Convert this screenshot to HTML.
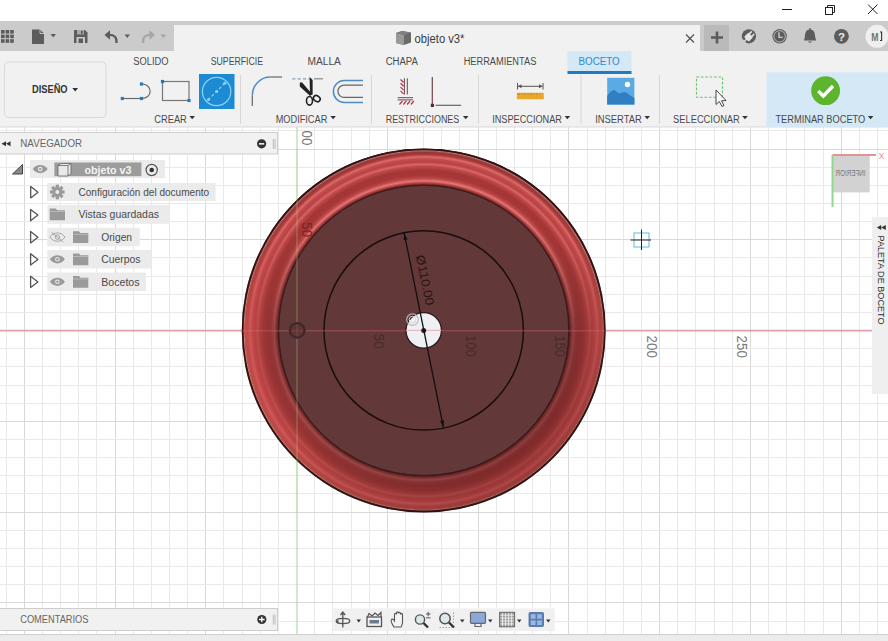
<!DOCTYPE html>
<html><head><meta charset="utf-8">
<style>
html,body{margin:0;padding:0;}
body{width:888px;height:641px;overflow:hidden;position:relative;background:#fff;font-family:"Liberation Sans",sans-serif;}
</style></head><body>
<svg width="888" height="641" viewBox="0 0 888 641" style="position:absolute;left:0;top:0" font-family="Liberation Sans, sans-serif">

<defs>
<radialGradient id="ring" gradientUnits="userSpaceOnUse" cx="423.7" cy="330.4" r="182.0">
<stop offset="0.0000" stop-color="#623839"/>
<stop offset="0.7929" stop-color="#623839"/>
<stop offset="0.7967" stop-color="#301616"/>
<stop offset="0.8011" stop-color="#4a2020"/>
<stop offset="0.8077" stop-color="#6a2828"/>
<stop offset="0.8407" stop-color="#7e2e2e"/>
<stop offset="0.8791" stop-color="#983636"/>
<stop offset="0.9121" stop-color="#ac3c3c"/>
<stop offset="0.9396" stop-color="#c04646"/>
<stop offset="0.9615" stop-color="#cc5050"/>
<stop offset="0.9780" stop-color="#d45a50"/>
<stop offset="0.9852" stop-color="#d06050"/>
<stop offset="0.9857" stop-color="#d89088"/>
<stop offset="0.9918" stop-color="#3a1414"/>
<stop offset="1.0000" stop-color="#2a1010"/>
</radialGradient>
<radialGradient id="band" gradientUnits="userSpaceOnUse" cx="423.7" cy="330.4" r="182.0">
<stop offset="0.0000" stop-color="#623839"/>
<stop offset="0.7929" stop-color="#623839"/>
<stop offset="0.7967" stop-color="#301616"/>
<stop offset="0.8022" stop-color="#7a2828"/>
<stop offset="0.8104" stop-color="#b84444"/>
<stop offset="0.8214" stop-color="#e87a7a"/>
<stop offset="0.8352" stop-color="#c04848"/>
<stop offset="0.8516" stop-color="#a83838"/>
<stop offset="0.8791" stop-color="#a43636"/>
<stop offset="0.9011" stop-color="#c04848"/>
<stop offset="0.9121" stop-color="#d86868"/>
<stop offset="0.9258" stop-color="#b84242"/>
<stop offset="0.9423" stop-color="#c44c4c"/>
<stop offset="0.9533" stop-color="#dc6c6c"/>
<stop offset="0.9670" stop-color="#a83a3a"/>
<stop offset="0.9780" stop-color="#983434"/>
<stop offset="0.9863" stop-color="#b06060"/>
<stop offset="0.9857" stop-color="#c08080"/>
<stop offset="0.9918" stop-color="#3a1414"/>
<stop offset="1.0000" stop-color="#2a1010"/>
</radialGradient>
<linearGradient id="mgrad" x1="0.5" y1="0" x2="0.5" y2="1">
<stop offset="0" stop-color="#fff"/>
<stop offset="0.2" stop-color="#fff" stop-opacity="0.95"/>
<stop offset="0.5" stop-color="#fff" stop-opacity="0.35"/>
<stop offset="1" stop-color="#fff" stop-opacity="0.45"/>
</linearGradient>
<linearGradient id="shade2" x1="0.25" y1="0.1" x2="0.8" y2="0.95">
<stop offset="0" stop-color="#000" stop-opacity="0"/>
<stop offset="0.5" stop-color="#000" stop-opacity="0"/>
<stop offset="1" stop-color="#200000" stop-opacity="0.22"/>
</linearGradient>
<mask id="tmask" maskUnits="userSpaceOnUse" x="0" y="0" width="888" height="641">
<rect x="241.7" y="148.39999999999998" width="364.0" height="364.0" fill="url(#mgrad)"/>
</mask>
<linearGradient id="shade" x1="0.2" y1="0" x2="0.8" y2="1">
<stop offset="0" stop-color="#ffffff" stop-opacity="0.16"/>
<stop offset="0.5" stop-color="#ffffff" stop-opacity="0"/>
<stop offset="1" stop-color="#000000" stop-opacity="0.16"/>
</linearGradient>
<linearGradient id="hlTop" x1="0" y1="0" x2="0" y2="1">
<stop offset="0" stop-color="#ff9c9c" stop-opacity="0.75"/>
<stop offset="0.25" stop-color="#ff9c9c" stop-opacity="0.2"/>
<stop offset="0.45" stop-color="#ff9c9c" stop-opacity="0"/>
</linearGradient>
<linearGradient id="hlTop2" x1="0" y1="0" x2="0.3" y2="1">
<stop offset="0" stop-color="#f09090" stop-opacity="0.45"/>
<stop offset="0.5" stop-color="#f09090" stop-opacity="0.1"/>
<stop offset="1" stop-color="#f09090" stop-opacity="0"/>
</linearGradient>
<linearGradient id="hlOut" x1="0" y1="0" x2="1" y2="1">
<stop offset="0" stop-color="#e87070" stop-opacity="0.35"/>
<stop offset="0.5" stop-color="#e06060" stop-opacity="0.15"/>
<stop offset="1" stop-color="#d85858" stop-opacity="0.3"/>
</linearGradient>
</defs>
<rect x="0" y="127" width="888" height="507" fill="#ffffff"/>
<line x1="6.5" y1="127" x2="6.5" y2="634" stroke="#e9e9e9"/>
<line x1="24.5" y1="127" x2="24.5" y2="634" stroke="#d9d9d9"/>
<line x1="42.5" y1="127" x2="42.5" y2="634" stroke="#e9e9e9"/>
<line x1="60.5" y1="127" x2="60.5" y2="634" stroke="#e9e9e9"/>
<line x1="78.5" y1="127" x2="78.5" y2="634" stroke="#e9e9e9"/>
<line x1="96.5" y1="127" x2="96.5" y2="634" stroke="#e9e9e9"/>
<line x1="115.5" y1="127" x2="115.5" y2="634" stroke="#d9d9d9"/>
<line x1="133.5" y1="127" x2="133.5" y2="634" stroke="#e9e9e9"/>
<line x1="151.5" y1="127" x2="151.5" y2="634" stroke="#e9e9e9"/>
<line x1="169.5" y1="127" x2="169.5" y2="634" stroke="#e9e9e9"/>
<line x1="187.5" y1="127" x2="187.5" y2="634" stroke="#e9e9e9"/>
<line x1="205.5" y1="127" x2="205.5" y2="634" stroke="#d9d9d9"/>
<line x1="223.5" y1="127" x2="223.5" y2="634" stroke="#e9e9e9"/>
<line x1="242.5" y1="127" x2="242.5" y2="634" stroke="#e9e9e9"/>
<line x1="260.5" y1="127" x2="260.5" y2="634" stroke="#e9e9e9"/>
<line x1="278.5" y1="127" x2="278.5" y2="634" stroke="#e9e9e9"/>
<line x1="314.5" y1="127" x2="314.5" y2="634" stroke="#e9e9e9"/>
<line x1="332.5" y1="127" x2="332.5" y2="634" stroke="#e9e9e9"/>
<line x1="351.5" y1="127" x2="351.5" y2="634" stroke="#e9e9e9"/>
<line x1="369.5" y1="127" x2="369.5" y2="634" stroke="#e9e9e9"/>
<line x1="387.5" y1="127" x2="387.5" y2="634" stroke="#d9d9d9"/>
<line x1="405.5" y1="127" x2="405.5" y2="634" stroke="#e9e9e9"/>
<line x1="423.5" y1="127" x2="423.5" y2="634" stroke="#e9e9e9"/>
<line x1="441.5" y1="127" x2="441.5" y2="634" stroke="#e9e9e9"/>
<line x1="459.5" y1="127" x2="459.5" y2="634" stroke="#e9e9e9"/>
<line x1="478.5" y1="127" x2="478.5" y2="634" stroke="#d9d9d9"/>
<line x1="496.5" y1="127" x2="496.5" y2="634" stroke="#e9e9e9"/>
<line x1="514.5" y1="127" x2="514.5" y2="634" stroke="#e9e9e9"/>
<line x1="532.5" y1="127" x2="532.5" y2="634" stroke="#e9e9e9"/>
<line x1="550.5" y1="127" x2="550.5" y2="634" stroke="#e9e9e9"/>
<line x1="568.5" y1="127" x2="568.5" y2="634" stroke="#d9d9d9"/>
<line x1="587.5" y1="127" x2="587.5" y2="634" stroke="#e9e9e9"/>
<line x1="605.5" y1="127" x2="605.5" y2="634" stroke="#e9e9e9"/>
<line x1="623.5" y1="127" x2="623.5" y2="634" stroke="#e9e9e9"/>
<line x1="641.5" y1="127" x2="641.5" y2="634" stroke="#e9e9e9"/>
<line x1="659.5" y1="127" x2="659.5" y2="634" stroke="#d9d9d9"/>
<line x1="677.5" y1="127" x2="677.5" y2="634" stroke="#e9e9e9"/>
<line x1="695.5" y1="127" x2="695.5" y2="634" stroke="#e9e9e9"/>
<line x1="714.5" y1="127" x2="714.5" y2="634" stroke="#e9e9e9"/>
<line x1="732.5" y1="127" x2="732.5" y2="634" stroke="#e9e9e9"/>
<line x1="750.5" y1="127" x2="750.5" y2="634" stroke="#d9d9d9"/>
<line x1="768.5" y1="127" x2="768.5" y2="634" stroke="#e9e9e9"/>
<line x1="786.5" y1="127" x2="786.5" y2="634" stroke="#e9e9e9"/>
<line x1="804.5" y1="127" x2="804.5" y2="634" stroke="#e9e9e9"/>
<line x1="823.5" y1="127" x2="823.5" y2="634" stroke="#e9e9e9"/>
<line x1="841.5" y1="127" x2="841.5" y2="634" stroke="#d9d9d9"/>
<line x1="859.5" y1="127" x2="859.5" y2="634" stroke="#e9e9e9"/>
<line x1="877.5" y1="127" x2="877.5" y2="634" stroke="#e9e9e9"/>
<line x1="0" y1="130.5" x2="888" y2="130.5" stroke="#e9e9e9"/>
<line x1="0" y1="149.5" x2="888" y2="149.5" stroke="#d9d9d9"/>
<line x1="0" y1="167.5" x2="888" y2="167.5" stroke="#e9e9e9"/>
<line x1="0" y1="185.5" x2="888" y2="185.5" stroke="#e9e9e9"/>
<line x1="0" y1="203.5" x2="888" y2="203.5" stroke="#e9e9e9"/>
<line x1="0" y1="221.5" x2="888" y2="221.5" stroke="#e9e9e9"/>
<line x1="0" y1="239.5" x2="888" y2="239.5" stroke="#d9d9d9"/>
<line x1="0" y1="257.5" x2="888" y2="257.5" stroke="#e9e9e9"/>
<line x1="0" y1="276.5" x2="888" y2="276.5" stroke="#e9e9e9"/>
<line x1="0" y1="294.5" x2="888" y2="294.5" stroke="#e9e9e9"/>
<line x1="0" y1="312.5" x2="888" y2="312.5" stroke="#e9e9e9"/>
<line x1="0" y1="348.5" x2="888" y2="348.5" stroke="#e9e9e9"/>
<line x1="0" y1="366.5" x2="888" y2="366.5" stroke="#e9e9e9"/>
<line x1="0" y1="385.5" x2="888" y2="385.5" stroke="#e9e9e9"/>
<line x1="0" y1="403.5" x2="888" y2="403.5" stroke="#e9e9e9"/>
<line x1="0" y1="421.5" x2="888" y2="421.5" stroke="#d9d9d9"/>
<line x1="0" y1="439.5" x2="888" y2="439.5" stroke="#e9e9e9"/>
<line x1="0" y1="457.5" x2="888" y2="457.5" stroke="#e9e9e9"/>
<line x1="0" y1="475.5" x2="888" y2="475.5" stroke="#e9e9e9"/>
<line x1="0" y1="493.5" x2="888" y2="493.5" stroke="#e9e9e9"/>
<line x1="0" y1="512.5" x2="888" y2="512.5" stroke="#d9d9d9"/>
<line x1="0" y1="530.5" x2="888" y2="530.5" stroke="#e9e9e9"/>
<line x1="0" y1="548.5" x2="888" y2="548.5" stroke="#e9e9e9"/>
<line x1="0" y1="566.5" x2="888" y2="566.5" stroke="#e9e9e9"/>
<line x1="0" y1="584.5" x2="888" y2="584.5" stroke="#e9e9e9"/>
<line x1="0" y1="602.5" x2="888" y2="602.5" stroke="#d9d9d9"/>
<line x1="0" y1="621.5" x2="888" y2="621.5" stroke="#e9e9e9"/>
<line x1="0" y1="330.70000000000005" x2="888" y2="330.70000000000005" stroke="#dea2aa" stroke-width="1.7"/>
<line x1="297" y1="127" x2="297" y2="634" stroke="#a8daa8" stroke-width="1.1"/>
<circle cx="423.7" cy="330.4" r="182.0" fill="url(#ring)"/>
<circle cx="423.7" cy="330.4" r="182.0" fill="url(#band)" mask="url(#tmask)"/>
<circle cx="423.7" cy="330.4" r="180.4" fill="url(#shade2)"/>
<circle cx="423.7" cy="330.4" r="145.0" fill="#623839" stroke="#3a1c1c" stroke-width="1"/>
<circle cx="423.7" cy="330.4" r="99.7" fill="none" stroke="#1a0d0d" stroke-width="1.5"/>
<line x1="241.7" y1="330.70000000000005" x2="605.7" y2="330.70000000000005" stroke="#e07080" stroke-width="1.5" opacity="0.3"/>
<line x1="297" y1="148.39999999999998" x2="297" y2="512.4" stroke="#b0d880" stroke-width="1.2" opacity="0.35"/>
<circle cx="423.7" cy="330.4" r="17.7" fill="#eef0f4" stroke="#2a1a1a" stroke-width="1.3"/>
<line x1="406.0" y1="330.40000000000003" x2="441.4" y2="330.40000000000003" stroke="#e8b8c0" stroke-width="1.4"/>
<circle cx="423.7" cy="330.4" r="2.5" fill="#222"/>
<line x1="404.2" y1="233.0" x2="443.4" y2="427.4" stroke="#111" stroke-width="1.3"/>
<path d="M0,0 L7,-2 L7,2 Z" fill="#111" transform="translate(404.2,233.0) rotate(78.59940972266045)"/>
<path d="M0,0 L-7,-2 L-7,2 Z" fill="#111" transform="translate(443.4,427.4) rotate(78.59940972266045)"/>
<text transform="translate(415.8,255.8) rotate(78.59940972266045)" font-size="12.2" fill="#2a1414" textLength="51" lengthAdjust="spacingAndGlyphs">Ø110.00</text>
<circle cx="412.5" cy="319.6" r="5.8" fill="none" stroke="#b8b8b8" stroke-width="1.1"/>
<circle cx="412.5" cy="319.6" r="3.3" fill="none" stroke="#d8d8d8" stroke-width="1"/>
<circle cx="412.5" cy="319.6" r="1.2" fill="#eee"/>
<circle cx="297.2" cy="330.4" r="7.3" fill="#5e3234" fill-opacity="0.6" stroke="#44262a" stroke-width="2.2"/>
<text transform="translate(374.2,333.8) rotate(90)" font-size="14.3" fill="#4a2a2c" textLength="14.8" lengthAdjust="spacingAndGlyphs">50</text>
<text transform="translate(465.6,335) rotate(90)" font-size="14.3" fill="#4a2a2c" textLength="21.6" lengthAdjust="spacingAndGlyphs">100</text>
<text transform="translate(555.3,335.2) rotate(90)" font-size="14.3" fill="#4a2a2c" textLength="21.6" lengthAdjust="spacingAndGlyphs">150</text>
<text transform="translate(646.8,335.6) rotate(90)" font-size="14.3" fill="#7a7a7a" textLength="22.2" lengthAdjust="spacingAndGlyphs">200</text>
<text transform="translate(737.3,335.6) rotate(90)" font-size="14.3" fill="#7a7a7a" textLength="22.2" lengthAdjust="spacingAndGlyphs">250</text>
<text transform="translate(301.6,222.3) rotate(90)" font-size="14.3" fill="#7a2424" textLength="14.8" lengthAdjust="spacingAndGlyphs">50</text>
<text transform="translate(301.5,130.6) rotate(90)" font-size="14.3" fill="#777" textLength="14.8" lengthAdjust="spacingAndGlyphs">00</text>


<rect x="0" y="0" width="888" height="21" fill="#ffffff"/>
<rect x="0" y="21" width="888" height="30" fill="#cbcbcb"/>
<rect x="174" y="25" width="526" height="26" fill="#f1f1f1"/>
<rect x="704" y="25" width="25" height="26" fill="#bababa"/>
<rect x="0" y="51" width="888" height="76" fill="#f1f1f1"/>
<rect x="0" y="126.5" width="888" height="1" fill="#dadada"/>
<rect x="0" y="634" width="888" height="7" fill="#ececec"/>
<rect x="0" y="634" width="888" height="1" fill="#cfcfcf"/>

<g stroke="#222" stroke-width="1" fill="none">
<line x1="782" y1="9.5" x2="792" y2="9.5"/>
<path d="M827.5,7.5 V5.5 H834.5 V12.5 H832.5"/>
<rect x="825.5" y="7.5" width="7" height="7"/>
<path d="M868,4.5 L877.5,14 M877.5,4.5 L868,14"/>
</g>
<rect x="1.00" y="30.00" width="3.6" height="3.6" fill="#5c5c5c"/>
<rect x="1.00" y="34.60" width="3.6" height="3.6" fill="#5c5c5c"/>
<rect x="1.00" y="39.20" width="3.6" height="3.6" fill="#5c5c5c"/>
<rect x="5.60" y="30.00" width="3.6" height="3.6" fill="#5c5c5c"/>
<rect x="5.60" y="34.60" width="3.6" height="3.6" fill="#5c5c5c"/>
<rect x="5.60" y="39.20" width="3.6" height="3.6" fill="#5c5c5c"/>
<rect x="10.20" y="30.00" width="3.6" height="3.6" fill="#5c5c5c"/>
<rect x="10.20" y="34.60" width="3.6" height="3.6" fill="#5c5c5c"/>
<rect x="10.20" y="39.20" width="3.6" height="3.6" fill="#5c5c5c"/>
<path d="M32,29.5 H40 L44,33.5 V44 H32 Z" fill="#5c5c5c"/>
<path d="M40,29.5 V33.5 H44" fill="none" stroke="#cbcbcb" stroke-width="0.9"/>
<path d="M50.5,34 h5.5 l-2.75,3.5 z" fill="#5c5c5c"/>
<path d="M74,30 H85 L87.5,32.5 V43 H74 Z" fill="#5c5c5c"/>
<rect x="77" y="30" width="7" height="4.5" fill="#a8a8a8"/>
<rect x="81" y="30.8" width="1.8" height="3" fill="#5c5c5c"/>
<rect x="76.5" y="37" width="8.5" height="6" fill="#cbcbcb"/>
<rect x="78.5" y="38.5" width="4.5" height="4.5" fill="#5c5c5c"/>
<path d="M116.5,43 C117,37 114,34.5 108,35" fill="none" stroke="#5c5c5c" stroke-width="2.2"/>
<path d="M104.5,35 L110,30.2 L110,39.8 Z" fill="#5c5c5c"/>
<path d="M124.5,34.5 h5.5 l-2.75,3.5 z" fill="#5c5c5c"/>
<path d="M143,43 C142.5,37 145.5,34.5 151.5,35" fill="none" stroke="#a6a6a6" stroke-width="2.2"/>
<path d="M155,35 L149.5,30.2 L149.5,39.8 Z" fill="#a6a6a6"/>
<path d="M160.5,34.5 h5.5 l-2.75,3.5 z" fill="#a6a6a6"/>
<path d="M396,33 L402,31 L411,32.5 L411,42.5 L404,45 L396,43 Z" fill="#6a6a6a"/>
<path d="M396,33 L404,35 L404,45 L396,43 Z" fill="#9a9a9a"/>
<path d="M396,33 L402,31 L411,32.5 L404,35 Z" fill="#808080"/>
<text x="414.5" y="43" font-size="12" fill="#3c3c3c" font-weight="normal" text-anchor="start" textLength="50" lengthAdjust="spacingAndGlyphs" >objeto v3*</text>
<path d="M686,34.5 L694,42.5 M694,34.5 L686,42.5" stroke="#555" stroke-width="1.3"/>
<path d="M711,37.5 H723 M717,31.5 V43.5" stroke="#5c5c5c" stroke-width="2.6"/>
<circle cx="748.9" cy="36.3" r="7.1" fill="#5c5c5c"/>
<g transform="rotate(45 748.9 36.8)"><rect x="745.6" y="34.2" width="6.6" height="6.2" rx="1" fill="#e4e4e4"/><rect x="746.3" y="31" width="1.6" height="3.5" fill="#e4e4e4"/><rect x="749.9" y="31" width="1.6" height="3.5" fill="#e4e4e4"/><rect x="748.2" y="40" width="1.4" height="4" fill="#e4e4e4"/></g>
<path d="M742.5,39.5 A7.1,7.1 0 0 0 745.5,42.6" stroke="#cbcbcb" stroke-width="1.6" fill="none"/>
<circle cx="779.6" cy="36.3" r="7.2" fill="#5c5c5c"/>
<circle cx="779.6" cy="36.3" r="5.7" fill="none" stroke="#cfcfcf" stroke-width="0.8"/>
<path d="M779,32.2 V37.3 H782.8" fill="none" stroke="#e8e8e8" stroke-width="1.1"/>
<path d="M810,29.5 C806,29.5 805,33 805,36 L804,40.5 H816 L815,36 C815,33 814,29.5 810,29.5 Z" fill="#5c5c5c"/>
<rect x="809.2" y="28.2" width="1.6" height="2" fill="#5c5c5c"/>
<path d="M808,41.5 H812 C812,43 808,43 808,41.5 Z" fill="#5c5c5c"/>
<circle cx="841.4" cy="36.3" r="7.4" fill="#5c5c5c"/>
<text x="841.4" y="40.6" font-size="11.5" fill="#ececec" font-weight="bold" text-anchor="middle" >?</text>
<circle cx="877" cy="36.3" r="11.5" fill="#efefef"/>
<text x="871.2" y="40.6" font-size="10" fill="#6c7470" font-weight="bold" text-anchor="start" textLength="7.2" lengthAdjust="spacingAndGlyphs" >M</text>
<path d="M880,32 H881.6 V40.5 H880" fill="none" stroke="#333" stroke-width="1.1"/>
<rect x="4.5" y="62" width="101.5" height="55.5" rx="4" fill="#f1f1f1" stroke="#d9d9d9" stroke-width="1"/>
<text x="32" y="93" font-size="10" fill="#333" font-weight="bold" text-anchor="start" textLength="35.6" lengthAdjust="spacingAndGlyphs" >DISEÑO</text>
<path d="M72.3,88 h5.8 l-2.9,3.4 z" fill="#333"/>
<text x="133.3" y="65.4" font-size="10" fill="#4a4a4a" font-weight="normal" text-anchor="start" textLength="35.3" lengthAdjust="spacingAndGlyphs" >SOLIDO</text>
<text x="210.7" y="65.4" font-size="10" fill="#4a4a4a" font-weight="normal" text-anchor="start" textLength="52.4" lengthAdjust="spacingAndGlyphs" >SUPERFICIE</text>
<text x="307.4" y="65.4" font-size="10" fill="#4a4a4a" font-weight="normal" text-anchor="start" textLength="33.5" lengthAdjust="spacingAndGlyphs" >MALLA</text>
<text x="385.7" y="65.4" font-size="10" fill="#4a4a4a" font-weight="normal" text-anchor="start" textLength="32.2" lengthAdjust="spacingAndGlyphs" >CHAPA</text>
<text x="463.7" y="65.4" font-size="10" fill="#4a4a4a" font-weight="normal" text-anchor="start" textLength="72.6" lengthAdjust="spacingAndGlyphs" >HERRAMIENTAS</text>
<rect x="567.5" y="51" width="64" height="22.5" fill="#d5e8f5"/>
<rect x="567.5" y="71" width="64" height="3" fill="#1f7cc0"/>
<text x="578.5" y="65.4" font-size="10" fill="#2a8ad0" font-weight="normal" text-anchor="start" textLength="41.2" lengthAdjust="spacingAndGlyphs" >BOCETO</text>
<rect x="766.5" y="72.3" width="122" height="54.7" fill="#d4e8f5"/>
<text x="154.3" y="122.6" font-size="10" fill="#4a4a4a" font-weight="normal" text-anchor="start" textLength="32.5" lengthAdjust="spacingAndGlyphs" >CREAR</text>
<path d="M189.4,116 h5.6 l-2.8,3.2 z" fill="#333"/>
<text x="275.7" y="122.6" font-size="10" fill="#4a4a4a" font-weight="normal" text-anchor="start" textLength="51.6" lengthAdjust="spacingAndGlyphs" >MODIFICAR</text>
<path d="M330.3,116 h5.6 l-2.8,3.2 z" fill="#333"/>
<text x="385.7" y="122.6" font-size="10" fill="#4a4a4a" font-weight="normal" text-anchor="start" textLength="73.6" lengthAdjust="spacingAndGlyphs" >RESTRICCIONES</text>
<path d="M462.9,116 h5.6 l-2.8,3.2 z" fill="#333"/>
<text x="492.2" y="122.6" font-size="10" fill="#4a4a4a" font-weight="normal" text-anchor="start" textLength="69.7" lengthAdjust="spacingAndGlyphs" >INSPECCIONAR</text>
<path d="M564.6,116 h5.6 l-2.8,3.2 z" fill="#333"/>
<text x="595.2" y="122.6" font-size="10" fill="#4a4a4a" font-weight="normal" text-anchor="start" textLength="46.6" lengthAdjust="spacingAndGlyphs" >INSERTAR</text>
<path d="M644.4,116 h5.6 l-2.8,3.2 z" fill="#333"/>
<text x="673.1" y="122.6" font-size="10" fill="#4a4a4a" font-weight="normal" text-anchor="start" textLength="66.7" lengthAdjust="spacingAndGlyphs" >SELECCIONAR</text>
<path d="M742.2,116 h5.6 l-2.8,3.2 z" fill="#333"/>
<text x="775.4" y="122.6" font-size="10" fill="#4a4a4a" font-weight="normal" text-anchor="start" textLength="89.9" lengthAdjust="spacingAndGlyphs" >TERMINAR BOCETO</text>
<path d="M867.8,116 h5.6 l-2.8,3.2 z" fill="#333"/>
<line x1="240.5" y1="75" x2="240.5" y2="124" stroke="#d6d6d6" stroke-width="1"/>
<line x1="371.5" y1="75" x2="371.5" y2="124" stroke="#d6d6d6" stroke-width="1"/>
<line x1="478.5" y1="75" x2="478.5" y2="124" stroke="#d6d6d6" stroke-width="1"/>
<line x1="581" y1="75" x2="581" y2="124" stroke="#d6d6d6" stroke-width="1"/>
<line x1="659.5" y1="75" x2="659.5" y2="124" stroke="#d6d6d6" stroke-width="1"/>
<path d="M122.5,98.5 H141.5" stroke="#6b6b6b" stroke-width="1.2" fill="none"/>
<path d="M141.5,84 C153,84 153,98.5 141.5,98.5" stroke="#6b6b6b" stroke-width="1.2" fill="none"/>
<rect x="120.7" y="96.9" width="3.2" height="3.2" fill="#2b78b8"/>
<rect x="139.9" y="96.9" width="3.2" height="3.2" fill="#2b78b8"/>
<rect x="139.9" y="82.4" width="3.2" height="3.2" fill="#2b78b8"/>
<rect x="162.5" y="81.5" width="26.5" height="19" fill="none" stroke="#777" stroke-width="1.2"/>
<rect x="160.9" y="79.9" width="3.2" height="3.2" fill="#2b78b8"/>
<rect x="187.4" y="98.9" width="3.2" height="3.2" fill="#2b78b8"/>
<rect x="199" y="74" width="35.5" height="35" fill="#1d8ad4"/>
<circle cx="216.6" cy="91.5" r="14.2" fill="none" stroke="#8cd4f6" stroke-width="1.2"/>
<path d="M208,100 L225.5,82.5" stroke="#8cd4f6" stroke-width="1.2" stroke-dasharray="3,2.2"/>
<circle cx="208.5" cy="99.5" r="1.5" fill="#8cd4f6"/>
<circle cx="216.6" cy="91.5" r="1.5" fill="#8cd4f6"/>
<circle cx="224.8" cy="83.3" r="1.5" fill="#8cd4f6"/>
<path d="M252.3,106 V95.5" stroke="#666" stroke-width="1.2" fill="none"/>
<path d="M252.3,95.5 A18,18.5 0 0 1 270.3,77" stroke="#4f8cc4" stroke-width="1.4" fill="none"/>
<path d="M270.3,77 H282" stroke="#666" stroke-width="1.2" fill="none"/>
<path d="M292.2,78.8 H310" stroke="#8aa2b6" stroke-width="1.2" stroke-dasharray="3.2,2.2"/>
<path d="M314,78.8 H323" stroke="#888" stroke-width="1.2"/>
<path d="M299.8,82.5 L302.2,82.5 L311.5,93.5 L310.2,96 L299.8,86.5 Z" fill="#222"/>
<path d="M309.6,77 L312.6,80 L312.6,94.5 L310,95.5 Z" fill="#222"/>
<ellipse cx="309.5" cy="100.8" rx="3" ry="4.3" fill="none" stroke="#222" stroke-width="1.6"/>
<ellipse cx="316.8" cy="98.6" rx="3.6" ry="2.8" transform="rotate(35 316.8 98.6)" fill="none" stroke="#222" stroke-width="1.6"/>
<path d="M363,80.6 H344.3 A10.9,10.9 0 0 0 344.3,102.4 H363" stroke="#4f8cc4" stroke-width="1.5" fill="none"/>
<path d="M363,85.2 H344 A6.1,6.1 0 0 0 344,97.4 H363" stroke="#666" stroke-width="1.2" fill="none"/>
<path d="M404.4,78.3 V94.5 M407.3,78.3 V94.5 M397.7,97.7 H413 M397.7,99.9 H413" stroke="#74444c" stroke-width="1" fill="none"/>
<path d="M400.5,79.5 L403.6,82.5 M400.5,83.3 L403.6,86.3 M400.5,87.1 L403.6,90.1 M400.5,90.9 L403.6,93.9" stroke="#b83048" stroke-width="1.2" fill="none"/>
<path d="M399.5,104.5 L402.5,101 M403.3,104.5 L406.3,101 M407.1,104.5 L410.1,101 M410.9,104.5 L413.9,101" stroke="#b83048" stroke-width="1.2" fill="none"/>
<path d="M432.3,77 V104" stroke="#74444c" stroke-width="1.2" fill="none"/>
<rect x="430.8" y="103.8" width="3.2" height="3.2" fill="#5a2a34"/>
<path d="M435.5,105.3 H461.2" stroke="#666" stroke-width="1.2" fill="none"/>
<path d="M517.5,83 V89.5 M543,83 V89.5 M518,86.3 H542.5" stroke="#555" stroke-width="1" fill="none"/>
<path d="M518,86.3 L521.5,84.3 V88.3 Z M542.5,86.3 L539,84.3 V88.3 Z" fill="#555"/>
<rect x="516.8" y="92.8" width="27" height="6.4" fill="#e9a82a"/>
<path d="M519,93 V95 M522,93 V94.3 M525,93 V95 M528,93 V94.3 M531,93 V95 M534,93 V94.3 M537,93 V95 M540,93 V94.3" stroke="#b07818" stroke-width="0.8"/>
<rect x="607.2" y="77.8" width="27.2" height="26.8" fill="#5aaae6"/>
<path d="M607.2,96 C611,90 614,88 617,92 C620,96 623,90 627,93 C630,95 632,97 634.4,98 V104.6 H607.2 Z" fill="#2f7fc4"/>
<circle cx="627.5" cy="84.5" r="2.7" fill="#ffffff"/>
<rect x="696.5" y="77" width="26" height="20.2" fill="none" stroke="#6cc070" stroke-width="1.1" stroke-dasharray="2.6,1.8"/>
<path d="M716,90 V104.5 L719.3,101.5 L722,106.5 L724,105.5 L721.5,100.8 L726,100.5 Z" fill="#fafafa" stroke="#333" stroke-width="0.9"/>
<circle cx="825.6" cy="90.7" r="14.4" fill="#5cb52c"/>
<path d="M818.3,91 L823.3,96 L833,86" stroke="#ffffff" stroke-width="3.4" fill="none"/>
<rect x="-1" y="132.5" width="278.5" height="21.5" fill="#f1f1f1" stroke="#cdcdcd" stroke-width="1"/>
<path d="M1.5,143.8 L6,141.3 V146.3 Z M6,143.8 L10.5,141.3 V146.3 Z" fill="#333"/>
<text x="20.3" y="147.2" font-size="10" fill="#666" font-weight="normal" text-anchor="start" textLength="61.8" lengthAdjust="spacingAndGlyphs" >NAVEGADOR</text>
<circle cx="261.6" cy="143.8" r="4.6" fill="#333"/>
<rect x="259" y="143.1" width="5.2" height="1.5" fill="#fff"/>
<path d="M273.3,139 V149 M275,139 V149" stroke="#999" stroke-width="0.6"/>
<rect x="30" y="160" width="135" height="18" fill="#ebebeb"/>
<path d="M22.5,164.5 V174 H12.5 Z" fill="#8a8a8a" stroke="#444" stroke-width="1" stroke-linejoin="round"/>
<path d="M32.7,169.1 C36.2,163.6 44.2,163.6 47.7,169.1 C44.2,174.6 36.2,174.6 32.7,169.1 Z" fill="#9a9a9a" stroke="#9a9a9a" stroke-width="0"/><circle cx="40.2" cy="169.1" r="2.3" fill="#ebebeb"/><circle cx="40.2" cy="169.1" r="1.2" fill="#9a9a9a"/>
<rect x="54.4" y="162.5" width="87" height="13.7" fill="#9c9c9c"/>
<path d="M58,165.5 L61,163.5 H71 V173.5 L68,176 H58 Z" fill="#e8e8e8" stroke="#666" stroke-width="0.8"/><path d="M58,165.5 H68 V176 M68,165.5 L71,163.5" fill="none" stroke="#666" stroke-width="0.8"/>
<text x="84.5" y="173.5" font-size="10.5" fill="#f4f4f4" font-weight="bold" text-anchor="start" textLength="47" lengthAdjust="spacingAndGlyphs" >objeto v3</text>
<circle cx="151.7" cy="170" r="5.6" fill="none" stroke="#555" stroke-width="1.2"/><circle cx="151.7" cy="170" r="2.3" fill="#333"/>
<rect x="47" y="183" width="168.6" height="18" fill="#ebebeb"/>
<path d="M30.7,186.5 L38,192.20000000000002 L30.7,197.9 Z" fill="none" stroke="#555" stroke-width="1.3" stroke-linejoin="round"/>
<rect x="55.699999999999996" y="184.7" width="3.2" height="3.5" fill="#9a9a9a" transform="rotate(0 57.3 192)"/><rect x="55.699999999999996" y="184.7" width="3.2" height="3.5" fill="#9a9a9a" transform="rotate(45 57.3 192)"/><rect x="55.699999999999996" y="184.7" width="3.2" height="3.5" fill="#9a9a9a" transform="rotate(90 57.3 192)"/><rect x="55.699999999999996" y="184.7" width="3.2" height="3.5" fill="#9a9a9a" transform="rotate(135 57.3 192)"/><rect x="55.699999999999996" y="184.7" width="3.2" height="3.5" fill="#9a9a9a" transform="rotate(180 57.3 192)"/><rect x="55.699999999999996" y="184.7" width="3.2" height="3.5" fill="#9a9a9a" transform="rotate(225 57.3 192)"/><rect x="55.699999999999996" y="184.7" width="3.2" height="3.5" fill="#9a9a9a" transform="rotate(270 57.3 192)"/><rect x="55.699999999999996" y="184.7" width="3.2" height="3.5" fill="#9a9a9a" transform="rotate(315 57.3 192)"/>
<circle cx="57.3" cy="192" r="5" fill="#9a9a9a"/><circle cx="57.3" cy="192" r="2" fill="#ebebeb"/>
<text x="78.5" y="196" font-size="10.5" fill="#4a4a4a" font-weight="normal" text-anchor="start" textLength="130.6" lengthAdjust="spacingAndGlyphs" >Configuración del documento</text>
<rect x="47.4" y="204.9" width="122" height="18.9" fill="#ebebeb"/>
<path d="M30.599999999999998,209.39999999999998 L37.9,215.1 L30.599999999999998,220.79999999999998 Z" fill="none" stroke="#555" stroke-width="1.3" stroke-linejoin="round"/>
<path d="M49.7,208.5 H55.7 L57.2,210.3 H65.0 V220.2 H49.7 Z" fill="#9a9a9a"/><rect x="49.7" y="211.1" width="15.3" height="0.7" fill="#c4c4c4"/>
<text x="78.5" y="217.7" font-size="10.5" fill="#4a4a4a" font-weight="normal" text-anchor="start" textLength="80.4" lengthAdjust="spacingAndGlyphs" >Vistas guardadas</text>
<rect x="47.2" y="227.8" width="92.60000000000001" height="18.5" fill="#ebebeb"/>
<path d="M30.599999999999998,231.5 L37.9,237.20000000000002 L30.599999999999998,242.9 Z" fill="none" stroke="#555" stroke-width="1.3" stroke-linejoin="round"/>
<path d="M49.9,237.10000000000002 C53.4,231.60000000000002 61.4,231.60000000000002 64.9,237.10000000000002 C61.4,242.60000000000002 53.4,242.60000000000002 49.9,237.10000000000002 Z" fill="none" stroke="#a4a4a4" stroke-width="1"/><circle cx="57.4" cy="237.10000000000002" r="2.2" fill="none" stroke="#a4a4a4" stroke-width="1"/><path d="M51.4,232.10000000000002 L63.4,242.10000000000002" stroke="#a4a4a4" stroke-width="1"/>
<path d="M73,231.3 H79 L80.5,233.10000000000002 H88.3 V243.0 H73 Z" fill="#9a9a9a"/><rect x="73" y="233.9" width="15.3" height="0.7" fill="#c4c4c4"/>
<text x="101.2" y="241.0" font-size="10.5" fill="#4a4a4a" font-weight="normal" text-anchor="start" textLength="30.9" lengthAdjust="spacingAndGlyphs" >Origen</text>
<rect x="47.2" y="250" width="103.99999999999999" height="18.5" fill="#ebebeb"/>
<path d="M30.599999999999998,253.7 L37.9,259.4 L30.599999999999998,265.1 Z" fill="none" stroke="#555" stroke-width="1.3" stroke-linejoin="round"/>
<path d="M49.9,259.3 C53.4,253.8 61.4,253.8 64.9,259.3 C61.4,264.8 53.4,264.8 49.9,259.3 Z" fill="#9a9a9a" stroke="#9a9a9a" stroke-width="0"/><circle cx="57.4" cy="259.3" r="2.3" fill="#ebebeb"/><circle cx="57.4" cy="259.3" r="1.2" fill="#9a9a9a"/>
<path d="M73,253.5 H79 L80.5,255.3 H88.3 V265.2 H73 Z" fill="#9a9a9a"/><rect x="73" y="256.1" width="15.3" height="0.7" fill="#c4c4c4"/>
<text x="101.2" y="263.2" font-size="10.5" fill="#4a4a4a" font-weight="normal" text-anchor="start" textLength="39.3" lengthAdjust="spacingAndGlyphs" >Cuerpos</text>
<rect x="47.2" y="272.5" width="98.8" height="18.5" fill="#ebebeb"/>
<path d="M30.599999999999998,276.2 L37.9,281.9 L30.599999999999998,287.6 Z" fill="none" stroke="#555" stroke-width="1.3" stroke-linejoin="round"/>
<path d="M49.9,281.8 C53.4,276.3 61.4,276.3 64.9,281.8 C61.4,287.3 53.4,287.3 49.9,281.8 Z" fill="#9a9a9a" stroke="#9a9a9a" stroke-width="0"/><circle cx="57.4" cy="281.8" r="2.3" fill="#ebebeb"/><circle cx="57.4" cy="281.8" r="1.2" fill="#9a9a9a"/>
<path d="M73,276.0 H79 L80.5,277.8 H88.3 V287.7 H73 Z" fill="#9a9a9a"/><rect x="73" y="278.6" width="15.3" height="0.7" fill="#c4c4c4"/>
<text x="101.2" y="285.7" font-size="10.5" fill="#4a4a4a" font-weight="normal" text-anchor="start" textLength="38.4" lengthAdjust="spacingAndGlyphs" >Bocetos</text>
<rect x="-1" y="608.5" width="278.5" height="22" fill="#f1f1f1" stroke="#cdcdcd" stroke-width="1"/>
<text x="20.2" y="623.3" font-size="10" fill="#666" font-weight="normal" text-anchor="start" textLength="68.3" lengthAdjust="spacingAndGlyphs" >COMENTARIOS</text>
<circle cx="261.8" cy="619.5" r="4.6" fill="#333"/><path d="M259,619.5 H264.6 M261.8,616.7 V622.3" stroke="#fff" stroke-width="1.3"/>
<path d="M273.3,614.5 V624.5 M275,614.5 V624.5" stroke="#999" stroke-width="0.6"/>
<rect x="333.4" y="608.4" width="221.4" height="22.6" fill="#f0f0f0"/>
<path d="M342.8,612 V627.5 M340.5,615 L342.8,612 L345.1,615" stroke="#555" stroke-width="1.3" fill="none"/>
<ellipse cx="343" cy="621" rx="6.8" ry="2.6" fill="none" stroke="#555" stroke-width="1.3"/>
<path d="M335.8,622 L338.5,619.5 V624 Z" fill="#555"/>
<path d="M356.5,619.5 h4.5 l-2.25,3 z" fill="#333"/>
<rect x="367" y="617" width="14.5" height="9.5" fill="none" stroke="#555" stroke-width="1.3"/><rect x="369.5" y="620" width="9.5" height="3.5" fill="#6a7a90"/>
<path d="M367.5,617 L369,613.5 L372,616 L375,613 L378,615.5 L381,612.5 V617" fill="none" stroke="#555" stroke-width="1.2"/>
<path d="M394,627 C392,624 390.5,621 391.5,619.5 C392.5,618.5 393.5,619.5 394.5,621 V614.5 C394.5,613 396.5,613 396.5,614.5 V613 C396.5,611.5 398.5,611.5 398.5,613 V613.5 C398.5,612 400.5,612 400.5,613.5 V614.5 C400.5,613.3 402.5,613.3 402.5,614.5 V622 C402.5,625 401.5,626 401,627 Z" fill="#f4f4f4" stroke="#555" stroke-width="1.1"/>
<circle cx="420" cy="619.5" r="4.6" fill="#dde8ea" stroke="#555" stroke-width="1.4"/><path d="M423.5,623 L428,627.5" stroke="#333" stroke-width="2.4"/>
<path d="M426,614 H430.5 M428.2,611.8 V616.2 M426,617.8 H430.5" stroke="#555" stroke-width="1"/>
<circle cx="445" cy="618.5" r="5.2" fill="#dde8ea" stroke="#555" stroke-width="1.5"/><path d="M449,622.5 L454,627.5" stroke="#333" stroke-width="2.4"/>
<path d="M439.5,627.5 H452 M453.5,612.5 V624" stroke="#999" stroke-width="0.9" stroke-dasharray="1.5,1.5"/>
<path d="M460,619.5 h4.5 l-2.25,3 z" fill="#333"/>
<rect x="470.5" y="612.3" width="15" height="11" rx="1" fill="#8aa8d8" stroke="#666" stroke-width="1.2"/><path d="M475,624 V626.5 H481 V624" fill="none" stroke="#666" stroke-width="1.2"/>
<path d="M488,619.5 h4.5 l-2.25,3 z" fill="#333"/>
<rect x="499.6" y="612.3" width="15" height="14.5" fill="#9a9a9a"/>
<line x1="502.6" y1="612.3" x2="502.6" y2="626.8" stroke="#f0f0f0" stroke-width="0.9"/>
<line x1="499.6" y1="615.1999999999999" x2="514.6" y2="615.1999999999999" stroke="#f0f0f0" stroke-width="0.9"/>
<line x1="505.6" y1="612.3" x2="505.6" y2="626.8" stroke="#f0f0f0" stroke-width="0.9"/>
<line x1="499.6" y1="618.0999999999999" x2="514.6" y2="618.0999999999999" stroke="#f0f0f0" stroke-width="0.9"/>
<line x1="508.6" y1="612.3" x2="508.6" y2="626.8" stroke="#f0f0f0" stroke-width="0.9"/>
<line x1="499.6" y1="621.0" x2="514.6" y2="621.0" stroke="#f0f0f0" stroke-width="0.9"/>
<line x1="511.6" y1="612.3" x2="511.6" y2="626.8" stroke="#f0f0f0" stroke-width="0.9"/>
<line x1="499.6" y1="623.9" x2="514.6" y2="623.9" stroke="#f0f0f0" stroke-width="0.9"/>
<rect x="499.6" y="612.3" width="15" height="14.5" fill="none" stroke="#666" stroke-width="1"/>
<path d="M517,619.5 h4.5 l-2.25,3 z" fill="#333"/>
<rect x="529" y="612.5" width="14.5" height="14" rx="1" fill="#5a7fb8" stroke="#4a6a9a" stroke-width="0.8"/>
<path d="M530.8,614.2 H535.5 V618.8 H530.8 Z M537.2,614.2 H541.8 V618.8 H537.2 Z M530.8,620.4 H535.5 V625 H530.8 Z M537.2,620.4 H541.8 V625 H537.2 Z" fill="#9ab8e0"/>
<path d="M546,619.5 h4.5 l-2.25,3 z" fill="#333"/>
<rect x="832.5" y="155" width="37.2" height="37.4" fill="#d2d2d2"/>
<text x="0" y="0" font-size="8.5" fill="#777" font-weight="normal" text-anchor="start" textLength="30" lengthAdjust="spacingAndGlyphs" transform="translate(865.5,176) scale(-1,1)">INFERIOR</text>
<path d="M832.5,155 H876" stroke="#e09494" stroke-width="2"/>
<path d="M832.5,155 V207" stroke="#90d890" stroke-width="2"/>
<text x="878.5" y="159" font-size="9" fill="#e89090" font-weight="normal" text-anchor="start" >X</text>
<rect x="872" y="217" width="20" height="177" fill="#efefef"/>
<path d="M876.8,227.5 L881.3,225 V230 Z M881.3,227.5 L885.8,225 V230 Z" fill="#333"/>
<text x="0" y="0" font-size="9" fill="#333" font-weight="normal" text-anchor="start" textLength="89" lengthAdjust="spacingAndGlyphs" transform="translate(878.2,235.5) rotate(90)">PALETA DE BOCETO</text>
<rect x="634" y="233" width="15" height="14" fill="none" stroke="#6ac0e0" stroke-width="1.1"/>
<path d="M641.5,229.5 V250 M630.5,240 H651" stroke="#222" stroke-width="1"/>
</svg>
</body></html>
